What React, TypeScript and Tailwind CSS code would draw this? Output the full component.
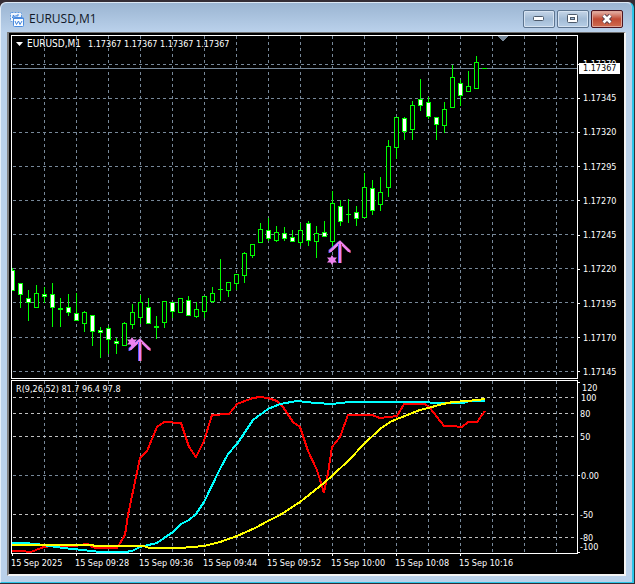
import React from 'react';

type Candle = [high: number, top: number, bottom: number, low: number, kind: 'up' | 'down' | 'doji'];

const LEFT = 12;
const TOP = 36;
const SUB_TOP = 381;
const STEP = 8;

const candles: Candle[] = [
  [268, 270, 291, 291, 'down'],
  [283, 283, 295, 308, 'down'],
  [290, 298, 303, 321, 'down'],
  [285, 293, 308, 308, 'up'],
  [287, 294, 297, 303, 'up'],
  [283, 294, 308, 327, 'down'],
  [298, 308, 310, 327, 'doji'],
  [294, 307, 313, 316, 'down'],
  [293, 313, 321, 321, 'down'],
  [311, 312, 324, 332, 'up'],
  [315, 315, 332, 346, 'down'],
  [327, 330, 333, 358, 'up'],
  [326, 328, 340, 354, 'down'],
  [338, 341, 344, 354, 'up'],
  [322, 323, 346, 346, 'up'],
  [304, 312, 325, 329, 'up'],
  [295, 302, 318, 324, 'up'],
  [298, 307, 324, 324, 'down'],
  [316, 326, 328, 339, 'doji'],
  [301, 301, 323, 328, 'up'],
  [302, 302, 312, 318, 'down'],
  [298, 298, 313, 313, 'up'],
  [296, 300, 316, 316, 'down'],
  [302, 309, 317, 318, 'up'],
  [296, 296, 312, 318, 'up'],
  [287, 293, 302, 303, 'up'],
  [259, 289, 290, 301, 'doji'],
  [282, 282, 291, 297, 'up'],
  [274, 274, 284, 290, 'up'],
  [252, 253, 276, 283, 'up'],
  [244, 244, 256, 258, 'up'],
  [223, 229, 243, 243, 'up'],
  [218, 230, 239, 241, 'down'],
  [226, 232, 241, 242, 'up'],
  [227, 233, 239, 241, 'down'],
  [230, 237, 242, 242, 'down'],
  [223, 230, 243, 246, 'up'],
  [221, 223, 241, 246, 'down'],
  [226, 233, 242, 258, 'up'],
  [221, 232, 237, 237, 'down'],
  [191, 203, 242, 248, 'up'],
  [200, 206, 222, 226, 'down'],
  [199, 214, 215, 223, 'doji'],
  [206, 212, 219, 226, 'down'],
  [173, 187, 218, 218, 'up'],
  [180, 188, 211, 215, 'down'],
  [177, 192, 205, 211, 'up'],
  [140, 146, 188, 197, 'up'],
  [117, 117, 148, 159, 'up'],
  [117, 118, 132, 140, 'down'],
  [101, 105, 130, 140, 'up'],
  [79, 99, 106, 111, 'down'],
  [97, 102, 117, 119, 'down'],
  [117, 117, 125, 140, 'down'],
  [102, 109, 126, 133, 'up'],
  [65, 77, 108, 108, 'up'],
  [80, 83, 96, 106, 'down'],
  [71, 86, 92, 92, 'up'],
  [56, 62, 89, 89, 'up'],
  [68, 68, 69, 69, 'doji'],
];

const gridColumns = Array.from({ length: 60 }, (_, i) => 44 + 32 * i);
const priceRows = [64, 98, 132, 166, 200, 234, 268, 302, 337, 371];
const prices = ['1.17370', '1.17345', '1.17320', '1.17295', '1.17270', '1.17245', '1.17220', '1.17195', '1.17170', '1.17145'];
const quotes = ['1.17367', '1.17367', '1.17367', '1.17367'];
const times = ['2025', '09:28', '09:36', '09:44', '09:52', '10:00', '10:08', '10:16'];

const levels = [
  { y: 397, color: '#c0c0c0' },
  { y: 413, color: '#c0c0c0' },
  { y: 436, color: '#c0c0c0' },
  { y: 475, color: '#778899' },
  { y: 514, color: '#c0c0c0' },
  { y: 537, color: '#c0c0c0' },
];

const scale = [
  { y: 387, x: 4, label: '120' },
  { y: 397, x: 3, label: '100' },
  { y: 413, x: 2, label: '80' },
  { y: 436, x: 2, label: '50' },
  { y: 475, x: 3, label: '0.00' },
  { y: 514, x: 2, label: '-50' },
  { y: 537, x: 2, label: '-80' },
  { y: 546, x: 2, label: '-100' },
];

const fast =
  '12,551 20,551 31,552 36,550 44,547 52,546 76,546 85,544 88,544 92,547 97,548 117,548 125,535 128,515 140,458 147,451 157,427 164,422 181,423 189,447 196,457 204,441 212,415 229,414 237,404 253,398 260,397 268,398 277,401 283,407 293,422 300,427 308,451 317,470 324,493 328,473 332,447 340,437 348,415 372,415 380,418 397,416 404,404 425,404 430,408 444,426 452,426 462,427 468,422 477,422 485,411';
const medium =
  '12,543 24,543 36,544 50,546 63,548 83,550 100,552 125,552 132,551 140,547 157,543 164,538 173,532 181,524 189,520 196,514 204,502 220,469 228,454 237,444 253,420 268,409 280,404 297,401 315,403 332,404 350,402 428,402 432,403 463,403 470,401 485,401';
const slow =
  '12,545 92,545 95,546 143,546 150,548 180,548 204,546 220,542 237,536 255,528 268,521 280,515 300,502 324,483 333,475 350,459 364,444 380,429 390,422 397,419 420,410 428,408 443,404 453,402 468,401 485,399';

function Bar({ candle, x }: { candle: Candle; x: number }) {
  const [high, top, bottom, low, kind] = candle;
  return (
    <g>
      {low - high > 1 && <rect x={x} y={high} width={1} height={low - high} fill="#00ff00" />}
      <rect x={x - 2} y={top} width={5} height={bottom - top} fill="#00ff00" />
      {kind !== 'doji' && (
        <rect
          x={x - 1}
          y={top + 1}
          width={3}
          height={bottom - top - 2}
          fill={kind === 'down' || bottom - top <= 3 ? '#ffffff' : '#000000'}
        />
      )}
    </g>
  );
}

function Signal({ x, y, starX, starY }: { x: number; y: number; starX: number; starY: number }) {
  return (
    <g transform={`translate(${x} ${y})`}>
      <path d="M-9.500 13V10.500L0 2" fill="none" stroke="#5a5aff" strokeWidth="2" />
      <path d="M2 3L11 11V13" fill="none" stroke="#a03848" strokeWidth="2" />
      <path d="M-8.500 12V11L1 2L10 11V12M1 2V23" fill="none" stroke="#ee82ee" strokeWidth="2.500" />
      <path d="M-0.500 4V23" stroke="#5a5aff" />
      <path d="M2.500 4V23" stroke="#a03848" />
      <path
        transform={`translate(${starX} ${starY})`}
        d="M0 -5 L1.5 -2.5 L5 -2.5 L3 0 L5 2.5 L1.5 2.5 L0 5 L-1.5 2.5 L-5 2.5 L-3 0 L-5 -2.5 L-1.5 -2.5 Z"
        fill="#ee82ee"
      />
    </g>
  );
}

function PricePlot() {
  return (
    <svg className="block h-full w-full" aria-label="EURUSD one minute candles">
      <g transform={`translate(${-LEFT} ${-TOP})`}>
        <g shapeRendering="crispEdges">
          {gridColumns.map((x) => (
            <line key={x} x1={x + 0.5} x2={x + 0.5} y1={36} y2={378} stroke="#778899" strokeDasharray="3 3" />
          ))}
          {priceRows.map((y) => (
            <line key={y} x1={13} x2="200%" y1={y + 0.5} y2={y + 0.5} stroke="#778899" strokeDasharray="3 3" />
          ))}
          <line x1={12} x2="200%" y1={68.5} y2={68.5} stroke="#778899" />
          <path d="M497 36h11l-5 5h-1z" fill="#778899" />
          {candles.map((candle, i) => (
            <Bar key={i} candle={candle} x={LEFT + STEP * i} />
          ))}
        </g>
        <Signal x={139} y={338} starX={-7} starY={4} />
        <Signal x={339} y={240} starX={-7} starY={20} />
      </g>
    </svg>
  );
}

function IndicatorPlot() {
  return (
    <svg className="block h-full w-full" aria-label="Oscillator lines">
      <g transform={`translate(${-LEFT} ${-SUB_TOP})`} shapeRendering="crispEdges">
        {gridColumns.map((x) => (
          <line key={x} x1={x + 0.5} x2={x + 0.5} y1={381} y2={553} stroke="#778899" strokeDasharray="3 3" />
        ))}
        {levels.map(({ y, color }) => (
          <line key={y} x1={13} x2="200%" y1={y + 0.5} y2={y + 0.5} stroke={color} strokeDasharray="3 3" />
        ))}
        <g fill="none" strokeWidth="2">
          <polyline points={fast} stroke="#ff0000" />
          <polyline points={medium} stroke="#00ffff" />
          <polyline points={slow} stroke="#ffff00" />
        </g>
      </g>
    </svg>
  );
}

function AppIcon() {
  return (
    <svg width="14" height="15" viewBox="0 0 14 15" aria-hidden="true">
      <rect x="0.5" y="0.5" width="11" height="9" rx="1" fill="#eef5fd" stroke="#5b97e0" strokeDasharray="2 1" />
      <path d="M2 5.500h1V3.500h1v2l2-2 1 1V3h2" fill="none" stroke="#3f83dd" />
      <rect x="3.5" y="5.5" width="10" height="9" rx="1" fill="#fafdff" stroke="#4b8ce0" />
      <path d="M3 6.5h11" stroke="#4b8ce0" />
      <path d="M5 9l1.500 3.500L8.500 9l1.500 3.500L12 9" fill="none" stroke="#3f83dd" />
    </svg>
  );
}

const captionButton =
  'flex h-[18px] w-8 items-center justify-center rounded-[2px] border border-[#5d7590] bg-linear-to-b from-[#c6d6e8] via-[#a2bbd5] via-50% to-[#b7cee6] shadow-[inset_0_0_0_1px_#d6e3f1]';

export default function App() {
  return (
    <div className="bg-[#342d35] pt-[2px] pr-px pb-px font-['DejaVu_Sans_Condensed','DejaVu_Sans',sans-serif] text-[9px] leading-[14px] text-white">
      <main className="rounded-t-md border-r-2 border-b border-l border-t border-t-[#dce8f5] border-r-[#2cc5e8] border-b-[#2cc5e8] border-l-[#e4eef8] bg-[#bad1ea] pr-1.5 pb-1.5 pl-1.5">
        <header className="-mx-1.5 flex h-[29px] items-center justify-between rounded-t-md bg-linear-to-b from-[#9bb5d2] to-[#bad1eb] pt-[3px] pr-[9px] pl-[9px]">
          <div className="flex items-center gap-[5px]">
            <AppIcon />
            <h1 className="font-['Open_Sans','Noto_Sans',sans-serif] text-xs leading-4 text-[#111827]">EURUSD,M1</h1>
          </div>
          <div className="flex gap-0.5">
            <button type="button" aria-label="Minimize" className={captionButton}>
              <svg width="12" height="6" viewBox="0 0 12 6"><rect x="0.5" y="0.5" width="10" height="4" rx="1" fill="#fff" stroke="#4d5a6b" /></svg>
            </button>
            <button type="button" aria-label="Maximize" className={captionButton}>
              <svg width="12" height="10" viewBox="0 0 12 10"><rect x="0.5" y="0.5" width="10" height="8" rx="1" fill="#fff" stroke="#4d5a6b" /><rect x="3.500" y="3.500" width="4" height="2" fill="#9db8d5" stroke="#4d5a6b" /></svg>
            </button>
            <button
              type="button"
              aria-label="Close"
              className="flex h-[18px] w-8 items-center justify-center rounded-[2px] border border-[#4c1420] bg-linear-to-b from-[#dfa296] from-10% via-[#c04a34] via-50% to-[#cf6c50] shadow-[inset_0_0_0_1px_#dfa497]"
            >
              <svg width="12" height="10" viewBox="0 0 12 10"><path d="M2.500 1.500l7 7M9.500 1.500l-7 7" stroke="#4f3a48" strokeWidth="4.500" /><path d="M2.500 1.500l7 7M9.500 1.500l-7 7" stroke="#fff" strokeWidth="2.800" /></svg>
            </button>
          </div>
        </header>

        <div className="border-t border-r-2 border-b-2 border-l-2 border-t-[#6d6d6d] border-r-[#f4f4f4] border-b-[#f4f4f4] border-l-[#808080] bg-black pt-[2px] pl-[2px]">
          <section className="flex">
            <div className="relative h-[344px] min-w-0 flex-1 border border-white">
              <PricePlot />
              <div className="absolute top-px left-1 flex items-center whitespace-nowrap">
                <svg width="7" height="4" viewBox="0 0 7 4" aria-hidden="true"><path d="M0 0h7L3.500 4z" fill="#fff" /></svg>
                <span className="ml-1 w-[61px] text-[10px]">EURUSD,M1</span>
                {quotes.map((quote, i) => (
                  <span key={i} className="w-9">{quote}</span>
                ))}
              </div>
            </div>
            <div className="relative w-[46px]">
              <ol className="flex h-full flex-col justify-between pt-[22px]">
                {prices.map((price) => (
                  <li key={price} className="flex items-center gap-[3px]">
                    <span className="h-px w-[2px] bg-white" />
                    {price}
                  </li>
                ))}
              </ol>
              <div className="absolute top-7 right-1 left-px bg-white pl-1 leading-[11px] text-black">1.17367</div>
            </div>
          </section>

          <section className="mt-px flex">
            <div className="relative h-[174px] min-w-0 flex-1 border border-white">
              <IndicatorPlot />
              <div className="absolute top-px left-1">R(9,26,52) 81.7 96.4 97.8</div>
            </div>
            <svg className="h-[174px] w-[46px]" aria-label="Oscillator scale">
              <g transform="translate(0 -380)" fill="#fff">
                <path d="M0 382.500h2M0 475.500h2M0 552.500h2" stroke="#fff" />
                {scale.map(({ y, x, label }) => (
                  <text key={label} x={x} y={y + 4}>{label}</text>
                ))}
              </g>
            </svg>
          </section>

          <ol className="flex h-5 overflow-hidden">
            {times.map((time) => (
              <li key={time} className="w-16 shrink-0 whitespace-nowrap">
                <div className="ml-px h-0.5 w-px bg-white" />
                15 Sep {time}
              </li>
            ))}
          </ol>
        </div>
      </main>
    </div>
  );
}
